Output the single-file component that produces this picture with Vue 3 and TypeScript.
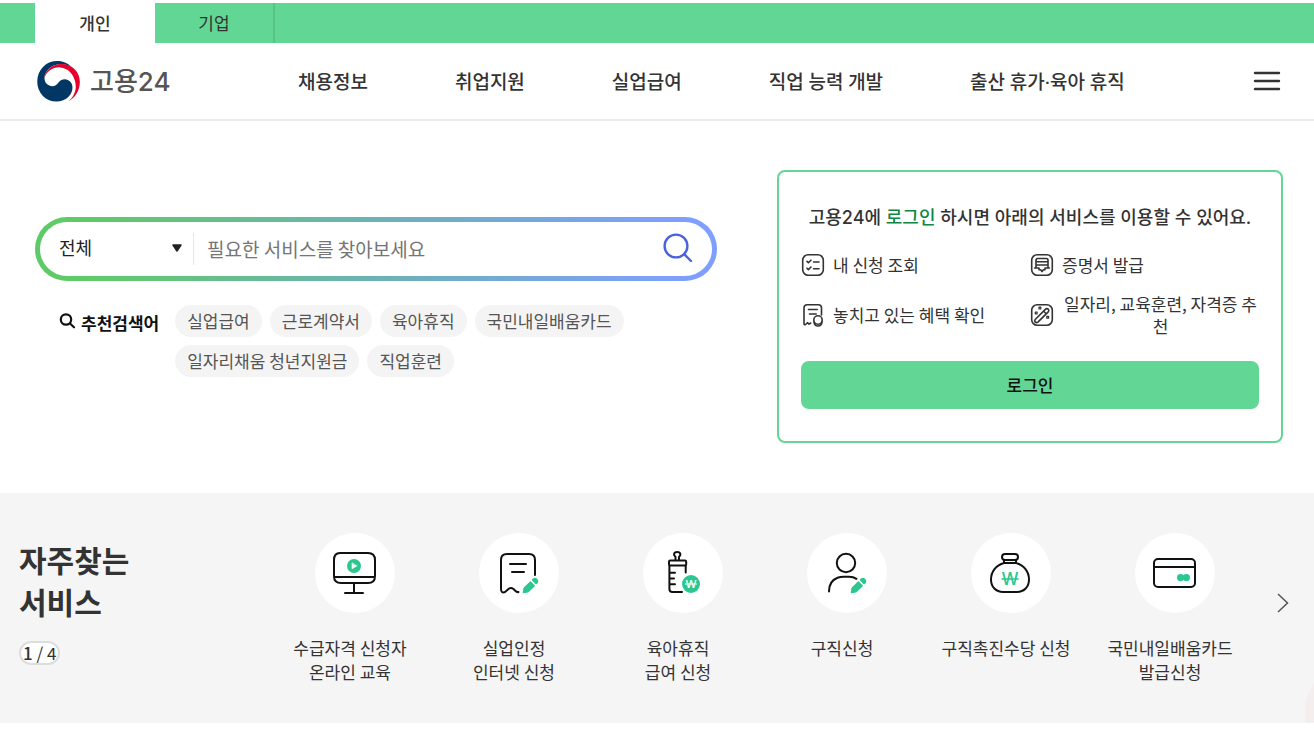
<script setup lang="ts">
import { ref } from 'vue'

interface Service {
  icon: 'monitor' | 'document' | 'bottle' | 'person' | 'bag' | 'card'
  lines: string[]
}

const menus: string[] = ['채용정보', '취업지원', '실업급여', '직업 능력 개발', '출산 휴가·육아 휴직']
const keywords: string[] = ['실업급여', '근로계약서', '육아휴직', '국민내일배움카드', '일자리채움 청년지원금', '직업훈련']
const benefits: { icon: string; label: string }[] = [
  { icon: 'list', label: '내 신청 조회' },
  { icon: 'certificate', label: '증명서 발급' },
  { icon: 'benefit', label: '놓치고 있는 혜택 확인' },
  { icon: 'wand', label: '일자리, 교육훈련, 자격증 추천' },
]
const services: Service[] = [
  { icon: 'monitor', lines: ['수급자격 신청자', '온라인 교육'] },
  { icon: 'document', lines: ['실업인정', '인터넷 신청'] },
  { icon: 'bottle', lines: ['육아휴직', '급여 신청'] },
  { icon: 'person', lines: ['구직신청'] },
  { icon: 'bag', lines: ['구직촉진수당 신청'] },
  { icon: 'card', lines: ['국민내일배움카드', '발급신청'] },
]

const category = ref('전체')
const query = ref('')
</script>

<template>
  <div class="page">
    <div class="topbar">
      <a href="#" class="tab active">개인</a>
      <a href="#" class="tab">기업</a>
    </div>

    <header class="header">
      <a href="#" class="logo">
        <svg width="43" height="41" viewBox="0 0 127 122" aria-hidden="true">
          <path fill="#003764" d="M88 8C70-4 38-3 18 17C-5 40-6 80 17 104C38 126 75 126 94 106C106 93 108 76 101 65C93 52 74 50 64 63C55 78 40 78 28 68C18 56 20 38 34 24C48 10 70 5 100 15C88 4 70-1 60 0Z" />
          <path fill="#e4002b" d="M22 50C22 30 45 9 72 9C104 9 127 32 127 62C127 90 112 110 92 121C108 108 118 88 114 66C110 40 92 20 68 19C46 18 28 32 22 50Z" />
        </svg>
        <span>고용24</span>
      </a>
      <nav class="nav">
        <a v-for="menu in menus" :key="menu" href="#">{{ menu }}</a>
      </nav>
      <button type="button" class="hamburger" aria-label="전체 메뉴">
        <svg width="28" height="20" viewBox="0 0 28 20" fill="none" stroke="#333" stroke-width="2.4" stroke-linecap="round">
          <path d="M2 2H26M2 10H26M2 18H26" />
        </svg>
      </button>
    </header>

    <main>
      <section class="hero">
        <div class="search-area">
          <form class="search" @submit.prevent>
            <div class="select-wrap">
              <select v-model="category" aria-label="검색 분류">
                <option>전체</option>
              </select>
              <svg class="caret" width="12" height="8" viewBox="0 0 12 8" aria-hidden="true">
                <path d="M2 1H10L6 7Z" fill="#222" stroke="#222" stroke-width="1.5" stroke-linejoin="round" />
              </svg>
            </div>
            <input v-model="query" type="text" placeholder="필요한 서비스를 찾아보세요" aria-label="검색어" />
            <button type="submit" aria-label="검색">
              <svg width="32" height="32" viewBox="0 0 32 32" fill="none" stroke="#4a62e0" stroke-width="2.4" stroke-linecap="round">
                <circle cx="14" cy="13" r="11.4" />
                <path d="M22.2 21.2L29 28" />
              </svg>
            </button>
          </form>

          <div class="suggest">
            <h2>
              <svg width="18" height="18" viewBox="0 0 18 18" fill="none" stroke="#111" stroke-width="2.2" stroke-linecap="round" aria-hidden="true">
                <circle cx="7" cy="7.5" r="5.2" />
                <path d="M11 11.5L15 15.3" />
              </svg>
              추천검색어
            </h2>
            <div class="chips">
              <a v-for="word in keywords" :key="word" href="#">{{ word }}</a>
            </div>
          </div>
        </div>

        <aside class="login-card">
          <p class="login-title">고용24에 <em>로그인</em> 하시면 아래의 서비스를 이용할 수 있어요.</p>
          <div class="benefits">
            <button v-for="item in benefits" :key="item.label" type="button">
              <svg width="24" height="24" viewBox="0 0 24 24" fill="none" stroke="#333" stroke-width="1.6" stroke-linecap="round" stroke-linejoin="round" aria-hidden="true">
                <template v-if="item.icon === 'list'">
                  <rect x="1.7" y="1.7" width="20.6" height="20.6" rx="5.5" />
                  <path d="M6 8.4L7.4 9.8L10 7.2M12.6 9H18M6 15.2L7.4 16.6L10 14M12.6 15.8H18" />
                </template>
                <template v-else-if="item.icon === 'certificate'">
                  <rect x="1.7" y="1.7" width="20.6" height="20.6" rx="5.5" />
                  <path d="M6 15V7.2Q6 5.5 7.8 5.5H16.2Q18 5.5 18 7.2V15M6.5 8.8H17.5M6.5 12H17.5M4.6 15H9V16.8H10.6L12 18.6L13.4 16.8H15V15H19.4" />
                </template>
                <template v-else-if="item.icon === 'benefit'">
                  <path d="M20.5 12V5Q20.5 1.8 17.3 1.8H6.2Q3 1.8 3 5V20.5Q3 22.6 4.8 21.3L6.4 19.7L8 21.2L9.7 20M7.5 6.5H16.2M8.5 11H15.2" />
                  <circle cx="17" cy="17" r="4.2" />
                  <path d="M13 18.8Q13.2 23 17 23Q20.8 23 21 18.8" />
                </template>
                <template v-else>
                  <rect x="1.7" y="1.7" width="20.6" height="20.6" rx="5.5" />
                  <path d="M5.2 16.5L15.3 6.4Q17 5 18.4 6.3Q19.4 7.6 18 9.1L7.9 19.1Q6.2 20.2 5 18.9Q4.2 17.8 5.2 16.5ZM13.7 8.2L16.2 10.7" />
                  <path stroke-width="1.2" d="M9 4.2H10.8V6H9ZM5.3 9H7.1V10.8H5.3ZM16.8 13.4H18.6V15.2H16.8Z" />
                </template>
              </svg>
              <span>{{ item.label }}</span>
            </button>
          </div>
          <a href="#" class="login-button">로그인</a>
        </aside>
      </section>

      <section class="services">
        <div class="services-head">
          <h2>자주찾는<br />서비스</h2>
          <p class="count"><strong>1</strong> / 4</p>
        </div>
        <ul>
          <li v-for="service in services" :key="service.icon">
            <a href="#">
              <span class="circle">
                <svg width="80" height="80" viewBox="0 0 80 80" fill="none" stroke="#111" stroke-width="2" stroke-linecap="round" stroke-linejoin="round" aria-hidden="true">
                  <template v-if="service.icon === 'monitor'">
                    <path d="M25 20H53Q60 20 60 27V43Q60 50 53 50H26Q19 50 19 43V27Q19 20 25 20ZM19 44H60M39 50V60M30 60H48" />
                    <circle cx="39" cy="33" r="7" fill="#2ac78f" stroke="none" />
                    <path d="M37 30.2V35.8L41.8 33Z" fill="#fff" stroke="#fff" stroke-width=".6" />
                  </template>
                  <template v-else-if="service.icon === 'document'">
                    <path d="M56 42V27Q56 21 50 21H28Q22 21 22 27V56Q22 60.5 26 59L29.5 56Q32 54.2 34.5 56L36.5 58Q38 59.5 39.5 59M31 31H47M33 39H45" />
                    <g fill="#2ac78f" stroke="#2ac78f">
                      <path d="M44.4 59.6L45 55.2L51.4 48.8L55.4 52.8L48.8 59Z" stroke-width="1.2" />
                      <path d="M53.4 46.8L54.8 45.7Q56 44.8 57.4 46L58.4 47.2Q59.2 48.6 58.2 49.8L57 50.8Z" stroke-width="1.2" />
                    </g>
                  </template>
                  <template v-else-if="service.icon === 'bottle'">
                    <path d="M32.5 26.5V24Q30.8 22.5 31 21.2Q31.4 19 34.2 19Q37 19 37.4 21.2Q37.6 22.5 36 24V26.5" />
                    <rect x="26" y="27.5" width="17.2" height="5" rx="1.2" />
                    <path d="M26.4 33V56Q26.4 59 29.4 59H39M42.7 33V39.5M26.4 39.7H32M26.4 45.5H31M26.4 51.3H32" />
                    <circle cx="48" cy="51" r="9" fill="#2ac78f" stroke="none" />
                    <text x="48" y="55" class="won won-small">W</text>
                    <path d="M42.5 51H53.5" stroke="#fff" stroke-width="1.1" />
                  </template>
                  <template v-else-if="service.icon === 'person'">
                    <circle cx="39" cy="30" r="9.2" />
                    <path d="M22 58.5Q22 48 30.5 44.8Q33 43.8 37 43.8H42Q46.5 43.8 49.5 45.8" />
                    <g fill="#2ac78f" stroke="#2ac78f">
                      <path d="M44.4 59.6L45 55.2L51.4 48.8L55.4 52.8L48.8 59Z" stroke-width="1.2" />
                      <path d="M53.4 46.8L54.8 45.7Q56 44.8 57.4 46L58.4 47.2Q59.2 48.6 58.2 49.8L57 50.8Z" stroke-width="1.2" />
                    </g>
                  </template>
                  <template v-else-if="service.icon === 'bag'">
                    <rect x="31" y="21" width="16" height="6" rx="3" />
                    <path d="M33 27V30M45 27V30M33 30C25 32 20 39 20 46.5C20 54 25 59 32 59H46C53 59 58 54 58 46.5C58 39 53 32 45 30Z" />
                    <text x="39" y="52" class="won won-large">W</text>
                    <path d="M31 46H47" stroke="#2ac78f" stroke-width="1.6" />
                  </template>
                  <template v-else>
                    <rect x="19" y="26" width="41" height="28" rx="4" />
                    <path d="M19 34H60" />
                    <g fill="#2ac78f" stroke="none">
                      <circle cx="45.6" cy="44.6" r="3.6" />
                      <circle cx="51.4" cy="44.6" r="3.6" />
                    </g>
                  </template>
                </svg>
              </span>
              <span v-for="line in service.lines" :key="line" class="label">{{ line }}</span>
            </a>
          </li>
        </ul>
        <button type="button" class="next" aria-label="다음">
          <svg width="12" height="20" viewBox="0 0 12 20" fill="none" stroke="#555" stroke-width="1.5">
            <path d="M1 1L10.5 10L1 19" />
          </svg>
        </button>
        <span class="bubble" aria-hidden="true"></span>
      </section>
    </main>
  </div>
</template>

<style>
body {
  margin: 0;
  background: #fff;
}
</style>

<style scoped>
.page,
.page button,
.page input,
.page select {
  font-family: 'Noto Sans CJK KR', 'Noto Sans', sans-serif;
}
.page {
  color: #333;
  font-size: 17px;
  line-height: 24px;
  padding: 3px 0 8px;
}
.page * {
  box-sizing: border-box;
}
a {
  color: inherit;
  text-decoration: none;
}
h2,
p,
ul {
  margin: 0;
  padding: 0;
}
button {
  border: 0;
  background: none;
  padding: 0;
  color: inherit;
  cursor: pointer;
}
svg {
  display: block;
  flex: none;
}

.topbar {
  display: flex;
  height: 40px;
  padding-left: 35px;
  background: #62d694;
}
.tab {
  width: 120px;
  line-height: 40px;
  text-align: center;
  border-right: 2px solid #57c486;
}
.tab.active {
  border-right: 0;
  background: #fff;
  font-weight: 500;
}

.header {
  display: flex;
  align-items: center;
  height: 78px;
  padding: 0 33px 0 37px;
  border-bottom: 2px solid #ebebeb;
}
.logo {
  display: flex;
  align-items: center;
  gap: 10px;
  width: 261px;
  color: #555;
  font-family: Inter, 'Noto Sans CJK KR', sans-serif;
  font-size: 26px;
  font-weight: 500;
  line-height: 40px;
}
.logo span {
  padding-top: 2px;
}
.nav {
  display: flex;
  flex: 1;
  gap: 87px;
  padding-top: 4px;
  font-family: Roboto, 'Noto Sans CJK KR', sans-serif;
  font-size: 19px;
  font-weight: 500;
  line-height: 28px;
  white-space: nowrap;
}

.hero {
  display: grid;
  grid-template-columns: 682fr 506fr;
  gap: 60px;
  padding: 49px 31px 50px 35px;
}
.search-area {
  padding-top: 47px;
}
.search {
  display: flex;
  align-items: center;
  height: 64px;
  padding: 0 18px;
  border: 5px solid transparent;
  border-radius: 32px;
  background:
    linear-gradient(#fff, #fff) padding-box,
    linear-gradient(90deg, #5fca68 8%, #6eafc0 56%, #7f9fff 95%) border-box;
}
.select-wrap {
  position: relative;
  width: 136px;
  height: 32px;
  border-right: 1px solid #e6e6e6;
}
select {
  width: 100%;
  height: 28px;
  padding: 0 0 0 1px;
  border: 0;
  background: none;
  appearance: none;
  color: #222;
  font-size: 18px;
}
.caret {
  position: absolute;
  top: 11px;
  right: 10px;
  pointer-events: none;
}
.search input {
  flex: 1;
  min-width: 0;
  height: 36px;
  padding: 0 0 2px 13px;
  border: 0;
  outline: 0;
  background: none;
  color: #333;
  font-size: 19px;
}
.search input::placeholder {
  color: #757575;
  opacity: 1;
}
.suggest {
  display: flex;
  gap: 16px;
  padding: 24px 24px 0;
}
.suggest h2 {
  display: flex;
  align-items: center;
  gap: 4px;
  height: 36px;
  color: #111;
  font-size: 17px;
  font-weight: 700;
  white-space: nowrap;
}
.suggest h2 svg {
  margin-bottom: 4px;
}
.chips {
  display: flex;
  flex-wrap: wrap;
  gap: 8px;
}
.chips a {
  padding: 0 12px;
  border-radius: 16px;
  background: #f4f4f4;
  color: #555;
  line-height: 32px;
}

.login-card {
  padding: 32px 22px;
  border: 2px solid #62d694;
  border-radius: 8px;
}
.login-title {
  font-family: Inter, 'Noto Sans CJK KR', sans-serif;
  font-size: 18px;
  font-weight: 500;
  line-height: 28px;
  text-align: center;
  white-space: nowrap;
}
.login-title em {
  color: #128444;
  font-style: normal;
}
.benefits {
  display: grid;
  grid-template-columns: 1fr 1fr;
  row-gap: 16px;
  margin-top: 21px;
}
.benefits button {
  display: flex;
  align-items: center;
  gap: 8px;
  font-size: 17px;
  line-height: 22px;
}
.login-button {
  display: block;
  margin-top: 24px;
  border-radius: 8px;
  background: #62d694;
  color: #111;
  font-weight: 500;
  line-height: 48px;
  text-align: center;
}

.services {
  position: relative;
  display: grid;
  grid-template-columns: 249px 1fr 62px;
  min-height: 230px;
  padding-left: 19px;
  overflow: hidden;
  background: #f5f5f5;
}
.services-head {
  padding-top: 45px;
}
.services-head h2 {
  font-size: 30px;
  font-weight: 700;
  line-height: 42px;
}
.count {
  display: inline-block;
  margin-top: 19px;
  padding: 0 2px;
  border: 2px solid #ddd;
  border-radius: 12px;
  background: #fff;
  font-size: 17px;
  line-height: 20px;
  white-space: nowrap;
}
.count strong {
  font-weight: 500;
}
.services ul {
  display: grid;
  grid-template-columns: repeat(6, 1fr);
  padding-top: 40px;
  list-style: none;
}
.services li a {
  display: flex;
  flex-direction: column;
  align-items: center;
}
.circle {
  width: 80px;
  height: 80px;
  margin: 0 0 23px 10px;
  border-radius: 50%;
  background: #fff;
}
.label {
  white-space: nowrap;
}
.won {
  font-family: Inter, sans-serif;
  font-weight: 500;
  text-anchor: middle;
  stroke: none;
}
.won-small {
  fill: #fff;
  font-size: 11px;
}
.won-large {
  fill: #2ac78f;
  font-size: 17px;
}
.next {
  align-self: center;
  justify-self: center;
  padding: 0 0 10px;
}
.bubble {
  position: absolute;
  right: -91px;
  bottom: -39px;
  width: 100px;
  height: 100px;
  border-radius: 50%;
  background: #f4eeee;
}
</style>
